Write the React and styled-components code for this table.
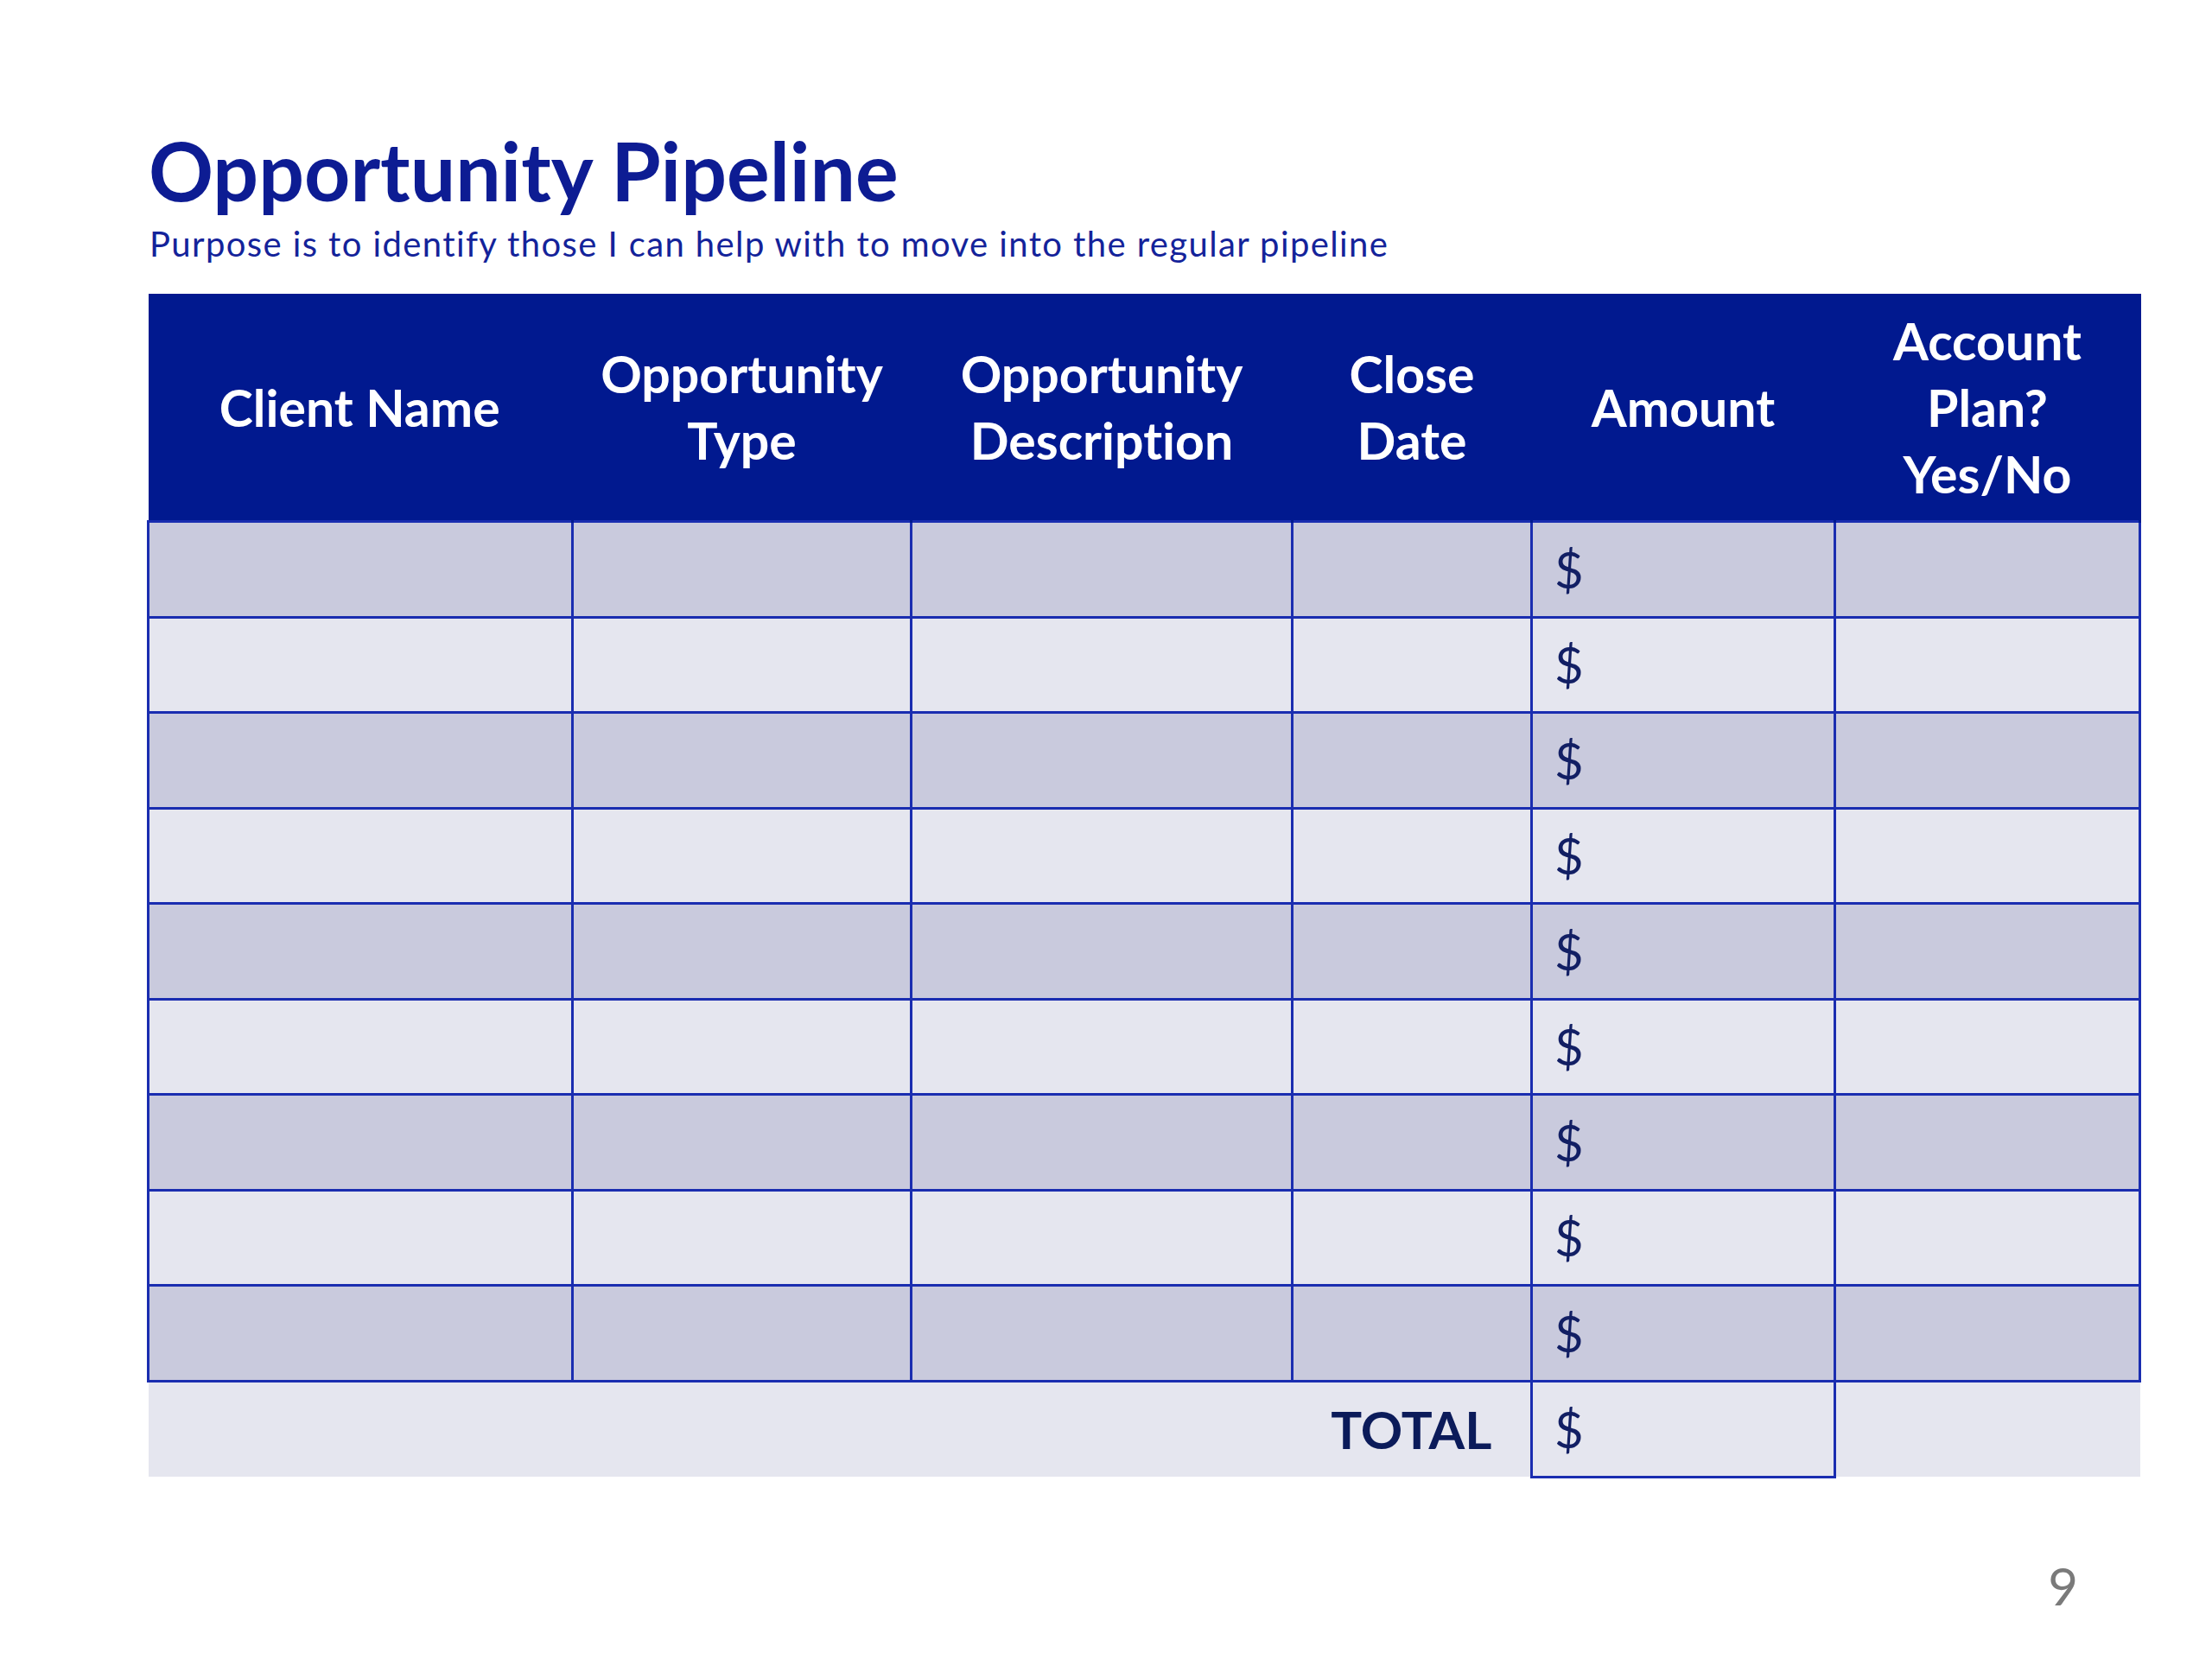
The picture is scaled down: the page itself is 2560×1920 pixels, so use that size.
import React from "react";
import styled, { createGlobalStyle } from "styled-components";

const GlobalStyle = createGlobalStyle`
    body {
        margin: 0;
        background: #ffffff;
    }
`;

const columns = [
    { key: "client", width: 491, label: ["Client Name"] },
    { key: "type", width: 392, label: ["Opportunity", "Type"] },
    { key: "desc", width: 441, label: ["Opportunity", "Description"] },
    { key: "close", width: 277, label: ["Close", "Date"] },
    { key: "amount", width: 351, label: ["Amount"] },
    { key: "plan", width: 353, label: ["Account", "Plan?", "Yes/No"] },
];

const ROWS = 9;

export default function App() {
    return (
        <>
            <GlobalStyle />
            <Page>
                <Title>Opportunity Pipeline</Title>
                <Subtitle>Purpose is to identify those I can help with to move into the regular pipeline</Subtitle>
                <Table>
                    <colgroup>
                        {columns.map((c) => (
                            <col key={c.key} style={{ width: c.width }} />
                        ))}
                    </colgroup>
                    <thead>
                        <tr>
                            {columns.map((c) => (
                                <HeadCell key={c.key}>
                                    {c.label.map((line, i) => (
                                        <HeadLine key={i}>{line}</HeadLine>
                                    ))}
                                </HeadCell>
                            ))}
                        </tr>
                    </thead>
                    <tbody>
                        {Array.from({ length: ROWS }).map((_, r) => (
                            <BodyRow key={r} $shaded={r % 2 === 0}>
                                {columns.map((c) => (
                                    <BodyCell key={c.key}>
                                        {c.key === "amount" ? <Dollar>$</Dollar> : null}
                                    </BodyCell>
                                ))}
                            </BodyRow>
                        ))}
                    </tbody>
                    <tfoot>
                        <TotalRow>
                            <TotalCell />
                            <TotalCell colSpan={2} />
                            <TotalCell>
                                <TotalLabel>TOTAL</TotalLabel>
                            </TotalCell>
                            <TotalAmountCell>
                                <Dollar>$</Dollar>
                            </TotalAmountCell>
                            <TotalCell />
                        </TotalRow>
                    </tfoot>
                </Table>
                <Footer>
                    <PageNumber>9</PageNumber>
                </Footer>
            </Page>
        </>
    );
}

const Page = styled.div`
    width: 2560px;
    height: 1920px;
    box-sizing: border-box;
    padding: 151px 85px 0 170px;
    display: flex;
    flex-direction: column;
    font-family: Lato, "Open Sans", sans-serif;
    font-variant-ligatures: none;
    background: #ffffff;
    overflow: hidden;
`;

const Title = styled.h1`
    margin: 0 0 0 2px;
    font-size: 93px;
    line-height: 92px;
    font-weight: 700;
    color: #0d1c93;
`;

const Subtitle = styled.p`
    margin: 20px 0 0 3px;
    font-size: 40px;
    line-height: 39px;
    font-weight: 400;
    letter-spacing: 1.4px;
    color: #14239a;
`;

const Table = styled.table`
    margin-top: 38px;
    width: 2305px;
    table-layout: fixed;
    border-collapse: collapse;
`;

const HeadCell = styled.th`
    height: 262px;
    padding: 0;
    background: #01198f;
    color: #ffffff;
    font-size: 59px;
    line-height: 77px;
    font-weight: 700;
    text-align: center;
    vertical-align: middle;
    border-right: 3px solid #01198f;
`;

const HeadLine = styled.span`
    display: block;
`;

const BodyRow = styled.tr`
    height: 110.5px;
    background: ${(p) => (p.$shaded ? "#c9cadd" : "#e5e6ef")};
`;

const BodyCell = styled.td`
    padding: 0 0 0 25px;
    border: 3px solid #1a2db0;
    vertical-align: middle;
`;

const Dollar = styled.span`
    font-size: 58px;
    line-height: 1;
    color: #121f64;
`;

const TotalRow = styled.tr`
    height: 111px;
    background: #e5e6ef;
`;

const TotalCell = styled.td`
    padding: 0;
    text-align: center;
    vertical-align: middle;
`;

const TotalAmountCell = styled.td`
    padding: 0 0 0 25px;
    border: 3px solid #1a2db0;
    border-top: none;
    vertical-align: middle;
`;

const TotalLabel = styled.span`
    font-size: 60px;
    font-weight: 700;
    color: #0b1b5a;
`;

const Footer = styled.div`
    display: flex;
    justify-content: flex-end;
    margin-top: 94px;
    padding-right: 70px;
`;

const PageNumber = styled.span`
    font-size: 60px;
    line-height: 60px;
    color: #7a7a7a;
`;
